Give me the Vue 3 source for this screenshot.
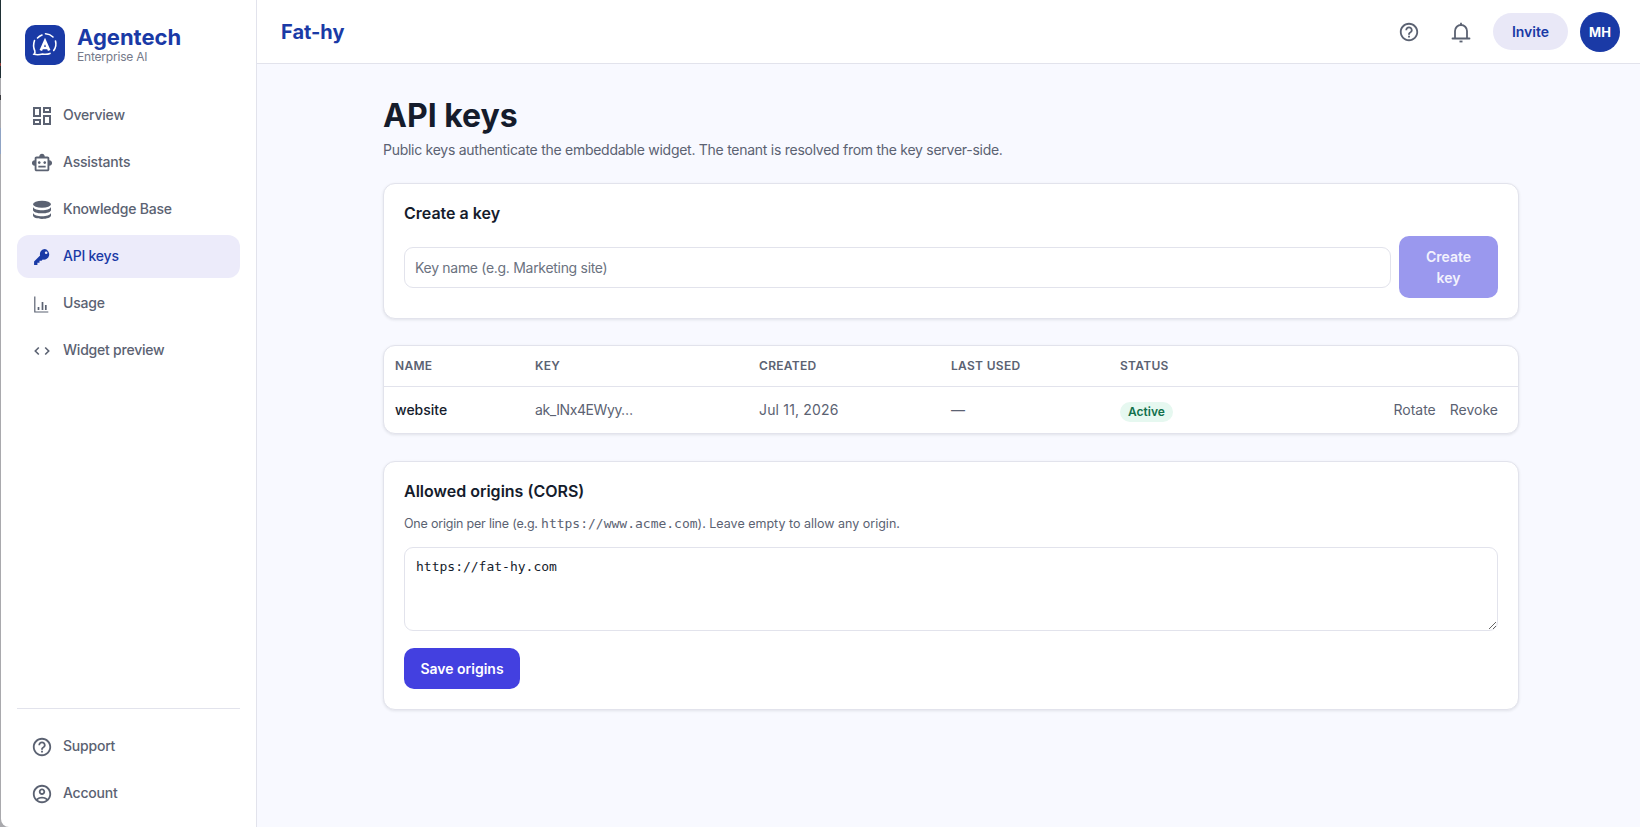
<script setup>
const nav = [
  { label: 'Overview', icon: 'grid' },
  { label: 'Assistants', icon: 'robot' },
  { label: 'Knowledge Base', icon: 'db' },
  { label: 'API keys', icon: 'key', active: true },
  { label: 'Usage', icon: 'chart' },
  { label: 'Widget preview', icon: 'code' },
]
const foot = [
  { label: 'Support', icon: 'help' },
  { label: 'Account', icon: 'user' },
]
const paths = {
  grid: 'M19 5v2h-4V5h4M9 5v6H5V5h4m10 8v6h-4v-6h4M9 17v2H5v-2h4M21 3h-8v6h8V3zM11 3H3v10h8V3zm10 8h-8v10h8V11zm-10 4H3v6h8v-6z',
  robot: 'M20 9V7c0-1.100-.9-2-2-2h-3c0-1.660-1.340-3-3-3S9 3.340 9 5H6c-1.100 0-2 .9-2 2v2c-1.660 0-3 1.340-3 3s1.340 3 3 3v4c0 1.100.9 2 2 2h12c1.100 0 2-.9 2-2v-4c1.660 0 3-1.340 3-3s-1.340-3-3-3zm-2 10H6V7h12v12zm-9-6c-.83 0-1.500-.67-1.500-1.500S8.170 10 9 10s1.500.67 1.500 1.500S9.830 13 9 13zm7.500-1.500c0 .83-.67 1.500-1.500 1.500s-1.500-.67-1.500-1.500.67-1.500 1.500-1.500 1.500.67 1.500 1.500zM8 15h8v2H8v-2z',
  key: 'M15.500 2.500a6 6 0 0 0-5.800 7.600L2.500 17.300V21.500h4v-2.500h2.500v-2.500h2.500l1.400-1.400A6 6 0 1 0 15.500 2.500zm1.500 6a1.600 1.600 0 1 1 0-3.200 1.600 1.600 0 0 1 0 3.200z',
  help: 'M11 18h2v-2h-2v2zm1-16C6.480 2 2 6.480 2 12s4.480 10 10 10 10-4.480 10-10S17.520 2 12 2zm0 18c-4.410 0-8-3.590-8-8s3.590-8 8-8 8 3.590 8 8-3.590 8-8 8zm0-14c-2.210 0-4 1.790-4 4h2c0-1.100.9-2 2-2s2 .9 2 2c0 2-3 1.750-3 5h2c0-2.250 3-2.500 3-5 0-2.210-1.790-4-4-4z',
  user: 'M12 2C6.480 2 2 6.480 2 12s4.480 10 10 10 10-4.480 10-10S17.520 2 12 2zM7.350 18.500C8.660 17.560 10.260 17 12 17s3.340.56 4.650 1.500c-1.310.94-2.910 1.500-4.650 1.500s-3.340-.56-4.650-1.500zm10.790-1.380C16.450 15.880 14.320 15 12 15s-4.450.88-6.140 2.120C4.700 15.730 4 13.950 4 12c0-4.420 3.580-8 8-8s8 3.580 8 8c0 1.950-.7 3.730-1.860 5.120zM12 6c-1.930 0-3.500 1.570-3.500 3.500S10.070 13 12 13s3.500-1.570 3.500-3.500S13.930 6 12 6zm0 5c-.83 0-1.500-.67-1.500-1.500S11.170 8 12 8s1.500.67 1.500 1.500S12.830 11 12 11z',
}
</script>

<template>
  <div class="app">
    <div class="side-wrap">
      <div class="edge"></div>
      <aside class="sidebar">
        <div class="brand">
          <div class="logo">
            <svg viewBox="0 0 40 40" width="40" height="40" fill="none" stroke="#fff" stroke-width="1.600" stroke-linecap="round">
              <path d="M12.500 13a12 12 0 0 1 4.500-3" />
              <path d="M20.500 8.800a11.500 11.500 0 0 1 7.500 3.200" />
              <path d="M30.500 16c.9 3.400.2 6.800-1.800 9.500" />
              <path d="M9.500 15.500c-1.300 3.700-1 7.500.3 10.300.4 1 .2 2.300-.8 3.500 3.200.7 6 .4 8.500-.3 2.700.4 5.400.3 7.500-.6" />
              <path d="M15.800 25.500l4.200-9.500 4.200 9.500M17.300 23h5.400" stroke-width="2.700" stroke-linecap="butt" />
            </svg>
          </div>
          <div class="brand-text">
            <div class="brand-name">Agentech</div>
            <div class="brand-sub">Enterprise AI</div>
          </div>
        </div>

        <nav class="nav">
          <a v-for="item in nav" :key="item.label" class="nav-item" :class="{ active: item.active }">
            <span class="nav-icon">
              <svg v-if="item.icon === 'grid'" viewBox="0 0 24 24" width="24" height="24" fill="currentColor"><path :d="paths.grid" /></svg>
              <svg v-else-if="item.icon === 'robot'" viewBox="0 0 24 24" width="22" height="22" fill="currentColor"><path :d="paths.robot" /></svg>
              <svg v-else-if="item.icon === 'db'" viewBox="0 0 24 24" width="24" height="24" fill="currentColor">
                <ellipse cx="12" cy="6.300" rx="9" ry="3.500" />
                <path d="M3 8.900c1 2.200 4.600 3.300 9 3.300s8-1.100 9-3.300v3c0 1.900-4 3.400-9 3.400s-9-1.500-9-3.400z" />
                <path d="M3 14.900c1 2.200 4.600 3.300 9 3.300s8-1.100 9-3.300v2.700c0 1.900-4 3.400-9 3.400s-9-1.500-9-3.400z" />
              </svg>
              <svg v-else-if="item.icon === 'key'" viewBox="0 0 24 24" width="20" height="20" fill="currentColor" fill-rule="evenodd"><path :d="paths.key" /></svg>
              <svg v-else-if="item.icon === 'chart'" viewBox="0 0 24 24" width="24" height="24" fill="none" stroke="currentColor" stroke-width="1.200">
                <path d="M4.800 4.500v15.500h13.500" />
                <path d="M8.500 18v-3M12.500 18V10M15.800 18v-5" stroke-width="1.700" />
              </svg>
              <svg v-else-if="item.icon === 'code'" viewBox="0 0 24 24" width="24" height="24" fill="none" stroke="currentColor" stroke-width="1.600"><path d="M8.800 8.500L5.300 12l3.500 3.500M15.200 8.500l3.500 3.500-3.500 3.500" /></svg>
            </span>
            <span class="nav-label">{{ item.label }}</span>
          </a>
        </nav>

        <div class="side-foot">
          <a v-for="item in foot" :key="item.label" class="nav-item">
            <span class="nav-icon">
              <svg viewBox="0 0 24 24" width="22" height="22" fill="currentColor"><path :d="paths[item.icon]" /></svg>
            </span>
            <span class="nav-label">{{ item.label }}</span>
          </a>
        </div>
      </aside>
    </div>

    <div class="right">
      <header class="topbar">
        <div class="tenant">Fat-hy</div>
        <div class="top-actions">
          <button class="icon-btn">
            <svg viewBox="0 0 24 24" width="22" height="22" fill="currentColor"><path :d="paths.help" /></svg>
          </button>
          <button class="icon-btn">
            <svg viewBox="0 0 24 24" width="24" height="24" fill="none" stroke="currentColor" stroke-width="1.800">
              <path d="M6 18.500V11a6 6 0 0 1 12 0v7.500" />
              <path d="M3.500 18.500h17" stroke-linecap="round" />
              <path d="M12 2.800v2.200" />
              <path d="M10.500 21.500h3" />
            </svg>
          </button>
          <button class="invite">Invite</button>
          <div class="avatar">MH</div>
        </div>
      </header>

      <main class="main">
        <h1 class="title">API keys</h1>
        <p class="subtitle">Public keys authenticate the embeddable widget. The tenant is resolved from the key server-side.</p>

        <section class="card create">
          <h2 class="card-title">Create a key</h2>
          <div class="create-row">
            <input class="input" placeholder="Key name (e.g. Marketing site)" />
            <button class="btn disabled">Create<br />key</button>
          </div>
        </section>

        <section class="card table-card">
          <table class="table">
            <thead>
              <tr>
                <th class="c1">NAME</th>
                <th class="c2">KEY</th>
                <th class="c3">CREATED</th>
                <th class="c4">LAST USED</th>
                <th class="c5">STATUS</th>
                <th></th>
              </tr>
            </thead>
            <tbody>
              <tr>
                <td class="name">website</td>
                <td class="keyval">ak_INx4EWyy…</td>
                <td class="num">Jul 11, 2026</td>
                <td>—</td>
                <td><span class="badge">Active</span></td>
                <td class="actions"><a>Rotate</a><a>Revoke</a></td>
              </tr>
            </tbody>
          </table>
        </section>

        <section class="card origins">
          <h2 class="card-title">Allowed origins (CORS)</h2>
          <p class="hint"><span class="hint-lead">One origin per line (e.g. </span><code>https://www.acme.com</code>). Leave empty to allow any origin.</p>
          <textarea class="textarea" rows="3">https://fat-hy.com</textarea>
          <button class="btn primary">Save origins</button>
        </section>
      </main>
    </div>
  </div>
</template>

<style>
html, body { margin: 0; padding: 0; background: #f8f9ff; }
</style>

<style scoped>
* { box-sizing: border-box; }
.app {
  display: flex;
  height: 827px;
  overflow: hidden;
  font-family: Inter, "Liberation Sans", sans-serif;
  background: #f8f9ff;
  color: #151c2c;
}
.side-wrap { display: flex; flex: none; background: #a9a9ad; }
.edge {
  width: 1px;
  background: linear-gradient(to bottom,
    #1f3035 0, #1f3035 63px, #8c3a35 63px, #8c3a35 66px, #1f3035 66px, #1f3035 78px,
    #a9a9ad 78px, #a9a9ad 95px, #3b3b40 95px, #3b3b40 100px,
    #a9a9ad 100px, #a9a9ad 128px, #8fa3c4 128px, #8fa3c4 154px,
    #a9a9ad 154px);
}
.sidebar {
  width: 256px;
  flex: none;
  display: flex;
  flex-direction: column;
  padding: 25px 16px 12px;
  background: #fff;
  border-right: 1px solid #e2e3ec;
  border-bottom-left-radius: 8px;
}
.brand { display: flex; align-items: center; gap: 12px; padding-left: 8px; height: 40px; }
.logo { width: 40px; height: 40px; border-radius: 10px; background: #1a3aa6; flex: none; }
.logo svg { display: block; }
.brand-name { font-size: 22px; line-height: 24px; font-weight: 700; color: #1a3aa6; }
.brand-sub { font-size: 12px; line-height: 16px; color: #757a8a; letter-spacing: -0.2px; }
.nav { display: flex; flex-direction: column; gap: 4px; margin-top: 29px; }
.nav-item {
  display: flex;
  align-items: center;
  gap: 9px;
  height: 43px;
  padding: 0 13px;
  border-radius: 12px;
  font-size: 14px;
  font-weight: 500;
  letter-spacing: -0.22px;
  color: #5b6272;
}
.nav-item.active { background: #ecebfa; color: #1a3aa6; }
.nav-icon { width: 24px; height: 24px; flex: none; display: flex; align-items: center; justify-content: center; }
.nav-label { margin-bottom: 2px; }
.side-foot {
  margin-top: auto;
  border-top: 1px solid #e2e3ec;
  padding-top: 16px;
  display: flex;
  flex-direction: column;
  gap: 4px;
}
.right { flex: 1; min-width: 0; display: flex; flex-direction: column; }
.topbar {
  height: 64px;
  flex: none;
  display: flex;
  align-items: center;
  justify-content: space-between;
  padding: 0 20px 0 24px;
  background: #fff;
  border-bottom: 1px solid #e2e3ec;
}
.tenant { font-size: 20px; font-weight: 700; color: #1a3aa6; }
.top-actions { display: flex; align-items: center; }
.icon-btn {
  width: 40px; height: 40px; padding: 0; border: 0; background: none; color: #5b6272;
  display: flex; align-items: center; justify-content: center; margin-right: 12px;
}
.invite {
  height: 37px; width: 75px; border: 0; border-radius: 19px; background: #e9e8f7; color: #1a3aa6;
  font: 600 14px Inter, sans-serif; margin-right: 12px; padding: 0;
}
.avatar {
  width: 40px; height: 40px; border-radius: 50%; background: #1a3aa6; color: #fff;
  display: flex; align-items: center; justify-content: center; font-size: 13px; font-weight: 700;
}
.main { flex: 1; padding: 32px 121px 0 126px; }
.title { margin: 0; font-size: 32px; line-height: 40px; font-weight: 700; color: #151c2c; }
.subtitle { margin: 4px 0 0; font-size: 14px; line-height: 20px; color: #5b6272; letter-spacing: -0.27px; }
.card {
  background: #fff;
  border: 1px solid #e2e3ec;
  border-radius: 12px;
  box-shadow: 0 1px 3px rgba(21, 28, 44, .1);
}
.create { margin-top: 23px; padding: 19px 20px 19px 20px; height: 136px; }
.card-title { margin: 0; font-size: 16px; line-height: 20px; font-weight: 600; color: #151c2c; }
.create-row { display: flex; align-items: center; gap: 8px; margin-top: 13px; }
.input {
  flex: 1; height: 41px; min-width: 0; border: 1px solid #e2e3ec; border-radius: 9px; padding: 0 10px;
  font: 400 14px Inter, sans-serif; letter-spacing: -0.3px; color: #151c2c; background: #fff; outline: none;
}
.input::placeholder { color: #6b7280; opacity: 1; }
.btn {
  border: 0; border-radius: 10px; color: #fff; font: 600 14px/21px Inter, sans-serif;
}
.btn.disabled { width: 99px; height: 62px; background: #9a98ee; padding: 0; color: #f3f2fd; }
.btn.primary { display: block; width: 116px; height: 41px; background: #4340e0; padding: 0; margin-top: 17px; }
.table-card { margin-top: 26px; overflow: hidden; }
.table { width: 100%; border-collapse: collapse; table-layout: fixed; }
th {
  height: 40px; padding: 0 11px; text-align: left; font-size: 12px; font-weight: 600; letter-spacing: .3px;
  color: #5b6272; border-bottom: 1px solid #e2e3ec;
}
td { height: 47px; padding: 0 11px; font-size: 14px; color: #5b6272; }
.c1 { width: 140px; }
.c2 { width: 224px; }
.c3 { width: 192px; }
.c4 { width: 169px; }
.c5 { width: 120px; }
td.name { color: #151c2c; font-weight: 500; }
td.keyval { letter-spacing: -0.4px; }
td.num { letter-spacing: .17px; }
.badge {
  display: inline-block; height: 20px; line-height: 20px; padding: 0 8px; border-radius: 10px;
  background: #e6f8f0; color: #11704c; font-size: 12px; font-weight: 600; vertical-align: -4px;
}
.actions { text-align: right; padding-right: 20px; white-space: nowrap; }
.actions a { margin-left: 14px; font-size: 14px; color: #5b6272; }
.origins { margin-top: 27px; padding: 19px 20px 20px 20px; }
.hint { margin: 14px 0 0; font-size: 12.5px; line-height: 18px; color: #5b6272; }
.hint-lead { letter-spacing: -0.2px; }
.hint code { font-family: "DejaVu Sans Mono", monospace; font-size: 13px; }
.textarea {
  display: block; width: 100%; height: 84px; margin-top: 14px; padding: 9px 11px;
  border: 1px solid #e2e3ec; border-radius: 9px; outline: none; background: #fff;
  font: 400 13px/20px "DejaVu Sans Mono", monospace; color: #151c2c;
}
</style>
